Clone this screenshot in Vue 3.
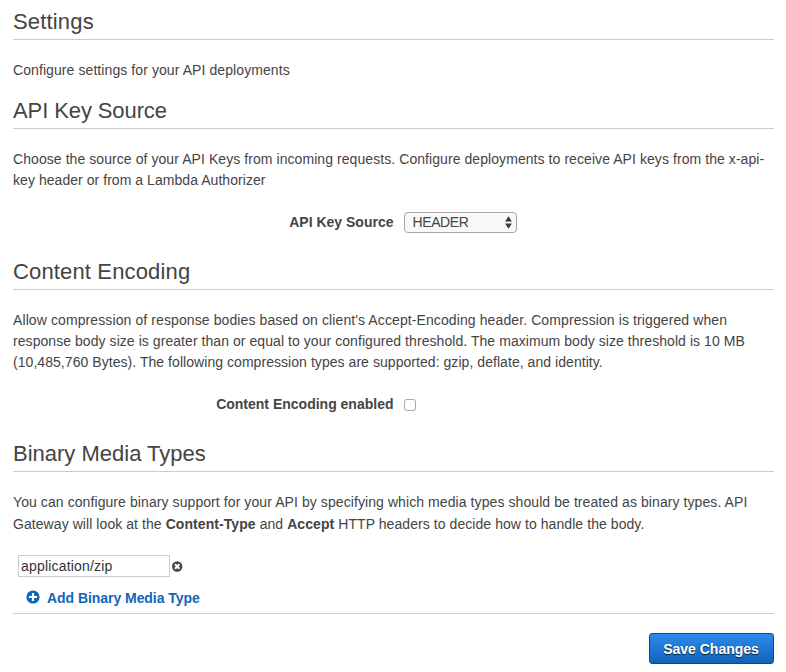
<script setup>
import { ref } from 'vue'

const keySource = ref('HEADER')
const encodingEnabled = ref(false)
const mediaTypes = ref(['application/zip'])
</script>

<template>
  <main class="settings">
    <section class="intro">
      <h2 class="t-settings">Settings</h2>
      <p class="d-intro">Configure settings for your API deployments</p>
    </section>

    <section class="source">
      <h2 class="t-source">API Key Source</h2>
      <p>
        <span class="line s1">Choose the source of your API Keys from incoming requests. Configure deployments to receive API keys from the x-api-</span>
        <span class="line s2">key header or from a Lambda Authorizer</span>
      </p>
      <div class="field">
        <label class="l-source">API Key Source</label>
        <div class="select">
          <span>{{ keySource }}</span>
          <svg width="7" height="13" viewBox="0 0 7 13"><path d="M3.5 0.3 6.9 5.6H.1zM3.5 12.7 6.9 7.4H.1z" fill="#3a3a3a" /></svg>
        </div>
      </div>
    </section>

    <section class="encoding">
      <h2 class="t-encoding">Content Encoding</h2>
      <p>
        <span class="line e1">Allow compression of response bodies based on client's Accept-Encoding header. Compression is triggered when</span>
        <span class="line e2">response body size is greater than or equal to your configured threshold. The maximum body size threshold is 10 MB</span>
        <span class="line e3">(10,485,760 Bytes). The following compression types are supported: gzip, deflate, and identity.</span>
      </p>
      <div class="field">
        <label class="l-encoding">Content Encoding enabled</label>
        <input v-model="encodingEnabled" class="check" type="checkbox" />
      </div>
    </section>

    <section class="media">
      <h2 class="t-media">Binary Media Types</h2>
      <p>
        <span class="line m1">You can configure binary support for your API by specifying which media types should be treated as binary types. API</span>
        <span class="line m2">Gateway will look at the <b>Content-Type</b> and <b>Accept</b> HTTP headers to decide how to handle the body.</span>
      </p>
      <div v-for="(type, i) in mediaTypes" :key="i" class="entry">
        <input v-model="mediaTypes[i]" class="text" type="text" />
        <svg width="11" height="11" viewBox="0 0 11 11">
          <circle cx="5.2" cy="5.5" r="5.2" fill="#444" />
          <path d="M3 3.3l4.4 4.4M7.4 3.3l-4.4 4.4" stroke="#fff" stroke-width="2" />
        </svg>
      </div>
      <a class="add">
        <svg width="14" height="14" viewBox="0 0 14 14">
          <circle cx="7" cy="7" r="6.6" fill="#1166bb" />
          <path d="M7 3v8M3 7h8" stroke="#fff" stroke-width="2.2" />
        </svg>
        <span>Add Binary Media Type</span>
      </a>
    </section>

    <footer>
      <button type="button"><span>Save Changes</span></button>
    </footer>
  </main>
</template>

<style>
body {
  background: #fff;
}
</style>

<style scoped>
.settings {
  box-sizing: border-box;
  width: 786px;
  height: 672px;
  padding: 4px 12px 0 13px;
  overflow: hidden;
  font: 14px/21px "Liberation Sans", Arial, sans-serif;
  color: #444;
}
.intro { height: 89px; }
.source { height: 161px; }
.encoding { height: 182px; }
.media { height: 177px; border-bottom: 1px solid #ccc; }
h2 {
  box-sizing: border-box;
  height: 36px;
  margin: 0 0 20px;
  border-bottom: 1px solid #ccc;
  font-size: 22px;
  font-weight: 400;
  line-height: 35px;
  white-space: nowrap;
}
p {
  margin: 0;
}
.t-settings { letter-spacing: 0.17px; }
.t-source { letter-spacing: -0.1px; }
.t-encoding { letter-spacing: 0.15px; }
.d-intro { letter-spacing: 0.085px; }
.s1 { letter-spacing: 0.07px; }
.s2 { letter-spacing: 0.05px; }
.e1 { letter-spacing: 0.102px; }
.e2 { letter-spacing: 0.06px; }
.e3 { letter-spacing: 0.053px; }
.m1 { letter-spacing: 0.083px; }
.m2 { letter-spacing: 0.068px; }
.line {
  display: block;
  white-space: nowrap;
}
.field {
  display: flex;
  align-items: center;
  height: 22px;
  margin-top: 20px;
}
label {
  width: 380.5px;
  margin-right: 10.5px;
  font-weight: 700;
  text-align: right;
  white-space: nowrap;
}
.select {
  box-sizing: border-box;
  display: flex;
  align-items: center;
  justify-content: space-between;
  width: 113px;
  height: 21px;
  padding: 0 4px 0 7.5px;
  border: 1px solid #a6a6a6;
  border-radius: 4px;
  background: #f8f8f8;
  letter-spacing: -0.4px;
}
.check {
  appearance: none;
  box-sizing: border-box;
  width: 12px;
  height: 12px;
  margin: 2px 0 0;
  border: 1px solid #a5a5a5;
  border-radius: 3px;
  background: #fff;
}
.m2 {
  padding-top: 1px;
}
.entry {
  display: flex;
  align-items: center;
  gap: 2px;
  margin: 20px 0 0 5px;
}
.text {
  box-sizing: border-box;
  width: 152px;
  height: 22px;
  padding: 0 2px;
  border: 1px solid #ccc;
  outline: none;
  font: inherit;
  letter-spacing: 0.18px;
  color: #333;
}
.add {
  display: flex;
  align-items: center;
  gap: 7px;
  margin: 10px 0 0 13px;
  font-weight: 700;
  letter-spacing: -0.05px;
  color: #1166bb;
}
.add span {
  padding-top: 1px;
}
.add svg {
  margin-top: -2px;
}
footer {
  display: flex;
  justify-content: flex-end;
  padding-top: 19px;
}
button {
  box-sizing: border-box;
  width: 125px;
  height: 31px;
  padding: 1px 1px 0 0;
  border: 1px solid #0e4a8a;
  border-radius: 3px;
  background: linear-gradient(#2d8cec, #1262b8);
  font: 700 14px/28px "Liberation Sans", Arial, sans-serif;
  color: #fff;
  text-shadow: 0 1px 1px #023;
}
</style>
